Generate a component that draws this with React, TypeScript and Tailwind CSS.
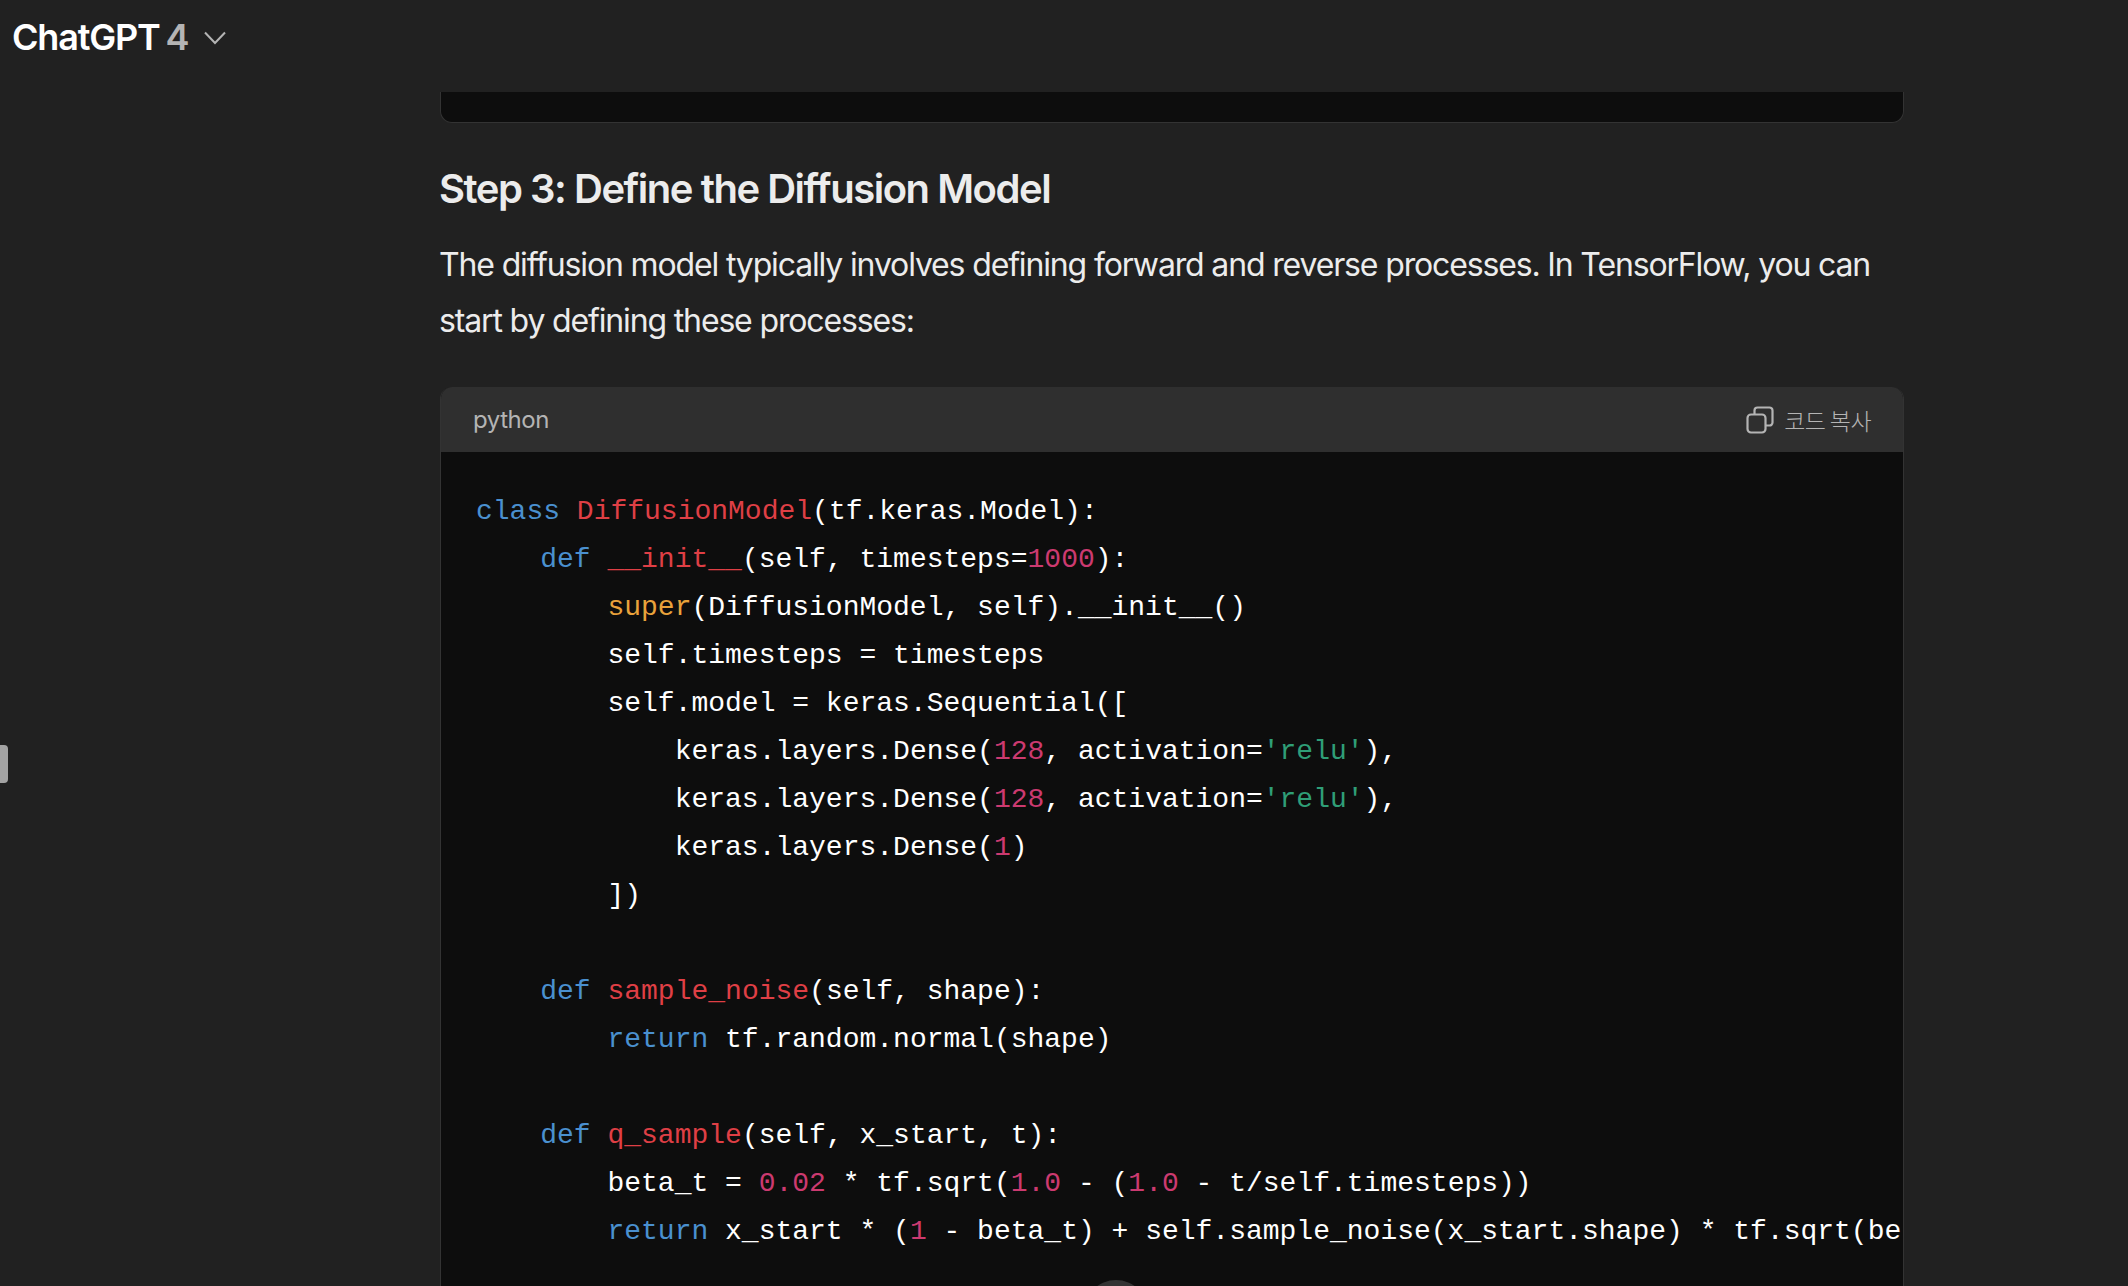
import React from "react";

const K = ({ children }: { children: React.ReactNode }) => <span className="text-[#4a90cf]">{children}</span>;
const F = ({ children }: { children: React.ReactNode }) => <span className="text-[#df3f45]">{children}</span>;
const N = ({ children }: { children: React.ReactNode }) => <span className="text-[#cc3a70]">{children}</span>;
const S = ({ children }: { children: React.ReactNode }) => <span className="text-[#2f9e77]">{children}</span>;
const B = ({ children }: { children: React.ReactNode }) => <span className="text-[#e9a23b]">{children}</span>;
const I = ({ n }: { n: number }) => <span className="-ml-[3px]">{" ".repeat(n)}</span>;

export default function App() {
  return (
    <div className="relative flex h-[1286px] w-[2128px] flex-col overflow-hidden bg-[#212121] font-['Inter',sans-serif] text-[#ececec]">
      <header className="flex h-[92px] shrink-0 items-start pl-3 pt-[13px]">
        <span className="text-[36px] font-semibold leading-[48px] tracking-[-1.2px] text-white">ChatGPT</span>
        <span className="ml-[6px] text-[36px] font-semibold leading-[48px] text-[#b4b4b4]">4</span>
        <svg className="ml-[13px] mt-[12px] h-[24px] w-[24px] text-[#b4b4b4]" viewBox="0 0 24 24" fill="none" stroke="currentColor" strokeWidth="2">
          <path d="M2 7.5 12 18 22 7.5" />
        </svg>
      </header>
      <main className="flex min-h-0 w-[1904px] flex-1 flex-col pl-[440px]">
        <div className="h-[31px] shrink-0 rounded-b-xl border-x border-b border-[#333333] bg-[#0d0d0d]" />
        <h3 className="mt-[41px] -ml-[1px] text-[40px] font-semibold leading-[50px] tracking-[-1.47px]">Step 3: Define the Diffusion Model</h3>
        <p className="mt-[23px] -ml-[1px] whitespace-nowrap text-[32px] leading-[56px] tracking-[-1.15px]">
          The diffusion model typically involves defining forward and reverse processes. In TensorFlow, you can
          <br />
          start by defining these processes:
        </p>
        <section className="mt-[38px] flex-1 overflow-hidden rounded-t-xl border-x border-[#333333] bg-[#0d0d0d]">
          <div className="flex h-[65px] items-center justify-between bg-[#2f2f2f] pl-[32px] pr-[32px] text-[#b4b4b4]">
            <span className="mt-[1px] text-[24px] leading-[32px] tracking-[-0.45px]">python</span>
            <span className="flex items-center gap-[10px]">
              <svg className="h-[28px] w-[28px]" viewBox="0 0 28 28" fill="none" stroke="currentColor" strokeWidth="2.2" strokeLinejoin="round">
                <rect x="1.5" y="8.5" width="18" height="18" rx="3.5" />
                <path d="M8.5 8.5V4.5a3 3 0 0 1 3-3h12a3 3 0 0 1 3 3v12a3 3 0 0 1-3 3h-4" />
              </svg>
              <span className="font-['Noto_Sans_CJK_KR',sans-serif] text-[23px] font-light leading-[32px] tracking-[-0.6px]">코드 복사</span>
            </span>
          </div>
          <pre className="whitespace-pre pl-[35px] pt-[36px] font-['Liberation_Mono',monospace] text-[28px] leading-[48px] text-white"><code>
<K>class</K> <F>DiffusionModel</F>(tf.keras.Model):{"\n"}
<I n={4} /><K>def</K> <F>__init__</F>(self, timesteps=<N>1000</N>):{"\n"}
<I n={8} /><B>super</B>(DiffusionModel, self).__init__(){"\n"}
<I n={8} />self.timesteps = timesteps{"\n"}
<I n={8} />self.model = keras.Sequential([{"\n"}
<I n={12} />keras.layers.Dense(<N>128</N>, activation=<S>'relu'</S>),{"\n"}
<I n={12} />keras.layers.Dense(<N>128</N>, activation=<S>'relu'</S>),{"\n"}
<I n={12} />keras.layers.Dense(<N>1</N>){"\n"}
<I n={8} />]){"\n"}
{"\n"}
<I n={4} /><K>def</K> <F>sample_noise</F>(self, shape):{"\n"}
<I n={8} /><K>return</K> tf.random.normal(shape){"\n"}
{"\n"}
<I n={4} /><K>def</K> <F>q_sample</F>(self, x_start, t):{"\n"}
<I n={8} />beta_t = <N>0.02</N> * tf.sqrt(<N>1.0</N> - (<N>1.0</N> - t/self.timesteps)){"\n"}
<I n={8} /><K>return</K> x_start * (<N>1</N> - beta_t) + self.sample_noise(x_start.shape) * tf.sqrt(beta_t){"\n"}
          </code></pre>
        </section>
      </main>
      <div className="absolute left-0 top-[745px] h-[38px] w-2 rounded-r-[4px] bg-[#a3a3a3]" />
      <div className="absolute left-[1084px] top-[1280px] h-16 w-16 rounded-full bg-[#333333]" />
    </div>
  );
}
